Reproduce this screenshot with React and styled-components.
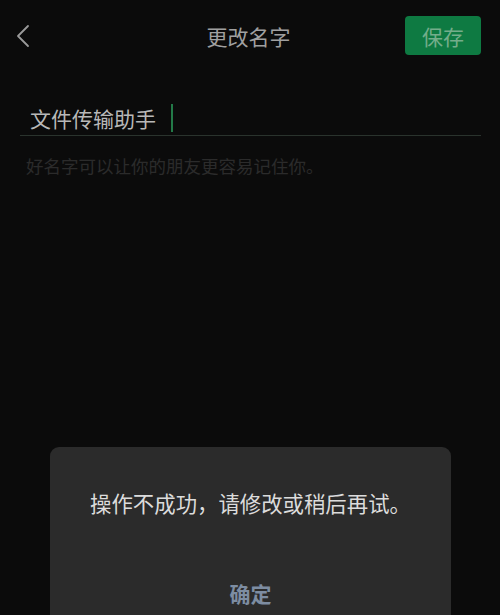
import styled, { createGlobalStyle } from "styled-components";
import React from "react";

const GlobalStyle = createGlobalStyle`
  html, body {
    margin: 0;
    padding: 0;
    background: #0b0b0b;
  }
  body {
    font-family: "Noto Sans CJK SC", "Noto Sans", sans-serif;
  }
`;

function BackIcon() {
  return (
    <svg width="14" height="24" viewBox="0 0 14 24" fill="none">
      <path d="M12 2 L2 12 L12 22" stroke="#9a9a9a" strokeWidth="1.8" strokeLinecap="round" strokeLinejoin="round" />
    </svg>
  );
}

export default function App() {
  return (
    <>
      <GlobalStyle />
      <Page>
        <Header>
          <BackButton type="button">
            <BackIcon />
          </BackButton>
          <Title>更改名字</Title>
          <SaveCell>
            <SaveButton type="button">保存</SaveButton>
          </SaveCell>
        </Header>

        <NameField>
          <NameText>文件传输助手</NameText>
          <Cursor />
        </NameField>
        <Hint>好名字可以让你的朋友更容易记住你。</Hint>

        <Overlay>
          <Dialog>
            <Message>操作不成功，请修改或稍后再试。</Message>
            <ConfirmButton type="button">确定</ConfirmButton>
          </Dialog>
        </Overlay>
      </Page>
    </>
  );
}

const Page = styled.div`
  position: relative;
  width: 500px;
  height: 615px;
  overflow: hidden;
  background: #0b0b0b;
  display: flex;
  flex-direction: column;
`;

const Header = styled.div`
  height: 71px;
  display: grid;
  grid-template-columns: 1fr auto 1fr;
  align-items: center;
  padding: 0 19px 0 16px;
`;

const BackButton = styled.button`
  justify-self: start;
  background: transparent;
  border: none;
  padding: 0;
  display: flex;
  align-items: center;
  height: 24px;
  margin-top: 1px;
`;

const Title = styled.div`
  font-size: 21px;
  color: #a0a0a0;
  line-height: 30px;
`;

const SaveCell = styled.div`
  display: flex;
  justify-content: flex-end;
`;

const SaveButton = styled.button`
  width: 76px;
  height: 39px;
  border: none;
  border-radius: 4px;
  background: #0e7a42;
  color: #74ad8b;
  font-family: "Noto Sans CJK SC", "Noto Sans", sans-serif;
  font-size: 21px;
  padding: 0;
`;

const NameField = styled.div`
  margin: 30px 19px 0 20px;
  padding-left: 10px;
  height: 34px;
  display: flex;
  align-items: center;
  border-bottom: 1px solid #2a332d;
`;

const NameText = styled.span`
  font-size: 21px;
  color: #b8b8b8;
  line-height: 34px;
`;

const Cursor = styled.span`
  width: 2px;
  height: 28px;
  margin-left: 15px;
  background: #237a48;
`;

const Hint = styled.div`
  margin: 18px 0 0 26px;
  font-size: 17.5px;
  line-height: 24px;
  color: #2b2b2b;
`;

const Overlay = styled.div`
  position: absolute;
  inset: 0;
  display: flex;
  align-items: flex-end;
  justify-content: center;
`;

const Dialog = styled.div`
  width: 401px;
  height: 178px;
  margin-left: 1px;
  margin-bottom: -10px;
  background: #2b2b2b;
  border-radius: 9px;
  display: flex;
  flex-direction: column;
  align-items: center;
  padding-top: 42px;
  box-sizing: border-box;
`;

const Message = styled.div`
  font-size: 21.4px;
  line-height: 28px;
  color: #dcdcdc;
  white-space: nowrap;
`;

const ConfirmButton = styled.button`
  margin-top: 61px;
  background: transparent;
  border: none;
  padding: 0;
  font-family: "Noto Sans CJK SC", "Noto Sans", sans-serif;
  font-size: 21px;
  font-weight: 700;
  line-height: 30px;
  color: #7d8da2;
`;
